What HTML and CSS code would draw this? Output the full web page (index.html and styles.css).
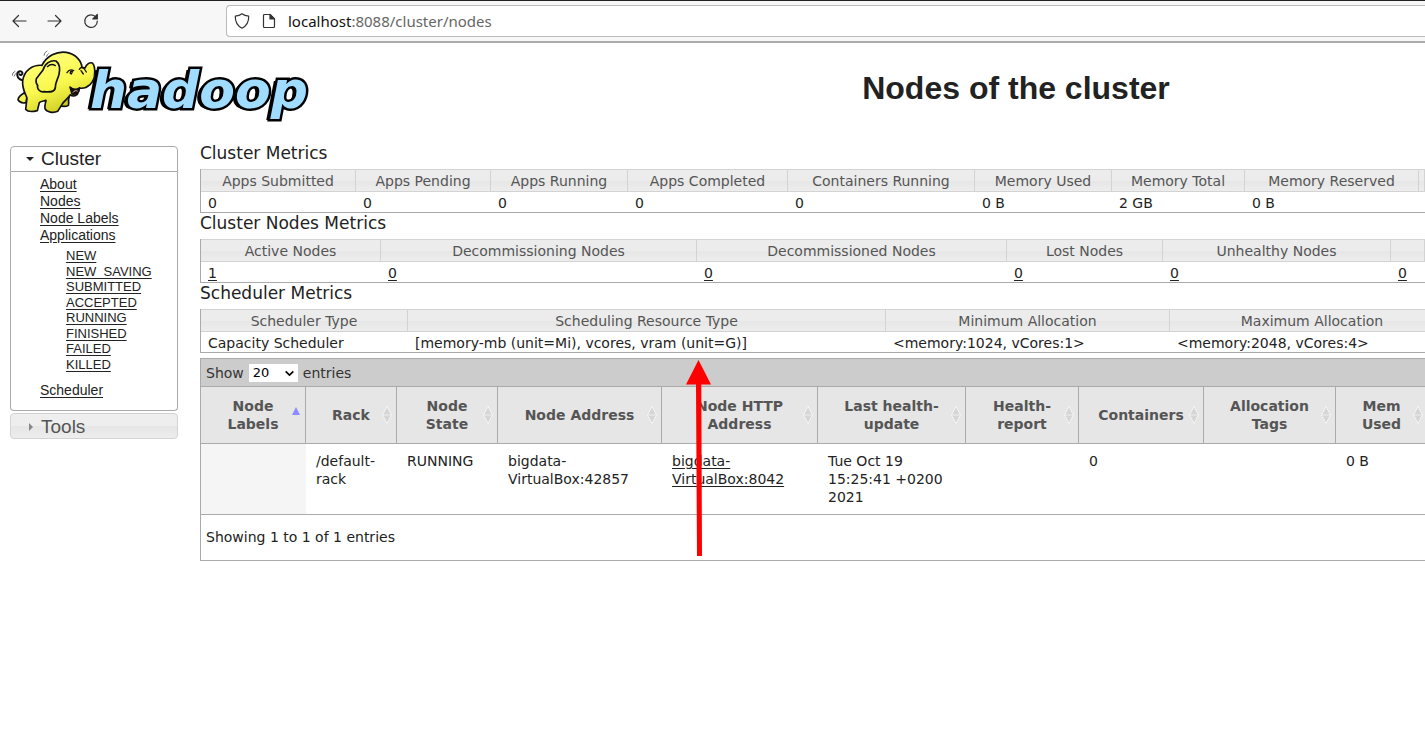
FILE: index.html
```html
<!DOCTYPE html>
<html lang="en">
<head>
<meta charset="utf-8">
<title>Nodes of the cluster</title>
<link rel="stylesheet" href="styles.css">
</head>
<body>
<svg class="defs" aria-hidden="true">
  <symbol id="sort" viewBox="0 0 10 18">
    <path d="M5 1L9 9L5 17L1 9Z" fill="#d6d6d6"/>
    <path d="M5 .5L9.500 9L5 17.500L.5 9Z" fill="none" stroke="#fff" stroke-width="1" stroke-dasharray="1.500 1"/>
    <path d="M1 9H9" stroke="#eee" stroke-width="1"/>
  </symbol>
</svg>
<nav class="browser" aria-label="Browser">
  <div class="browser-buttons">
    <button type="button" aria-label="Back"><svg viewBox="0 0 16 16"><path d="M15 8H2M7.500 2.500L2 8l5.500 5.500"/></svg></button>
    <button type="button" aria-label="Forward"><svg viewBox="0 0 16 16"><path d="M1 8h13M8.500 2.500L14 8l-5.500 5.500"/></svg></button>
    <button type="button" aria-label="Reload"><svg viewBox="0 0 16 16"><path d="M13 4.300A6.300 6.300 0 1 0 14.300 8"/><path d="M14.300 1.500V6H9.800Z" class="solid"/></svg></button>
  </div>
  <div class="urlbar">
    <svg viewBox="0 0 16 16"><path d="M8 .8C6 2.400 3.800 3 1.300 3.200C1.100 8.500 3 12.500 8 15.200C13 12.500 14.900 8.500 14.700 3.200C12.200 3 10 2.400 8 .8Z"/></svg>
    <svg viewBox="0 0 16 16"><path d="M3.500 1.500H9L13.500 6V13.500a1 1 0 0 1-1 1H3.500a1 1 0 0 1-1-1V2.500a1 1 0 0 1 1-1Z"/><path d="M9 1.500V6h4.500Z" class="solid"/></svg>
    <div class="url" role="textbox" contenteditable="true" spellcheck="false" aria-label="Address"><b>localhost</b>:8088/cluster/nodes</div>
  </div>
</nav>

<header class="banner">
  <div class="logo">
    <svg class="elephant" viewBox="0 0 300 225" aria-hidden="true">
      <defs><linearGradient id="skin" gradientUnits="userSpaceOnUse" x1="90" y1="10" x2="160" y2="200"><stop offset="0" stop-color="#ffff80"/><stop offset=".55" stop-color="#f9f84e"/><stop offset="1" stop-color="#c9c81c"/></linearGradient></defs>
      <g fill="url(#skin)" stroke="#111" stroke-width="5" stroke-linejoin="round" stroke-linecap="round">
        <path d="M44 97C33 98 23 92 22 82C20 70 34 66 37 74C39 80 31 83 29 79" fill="none" stroke-width="6"/>
        <path d="M42 135C32 141 25 149 24 155C29 164 40 166 48 164L52 140Z"/>
        <path d="M145 145L178 145C173 155 178 166 175 172C168 177 155 175 146 173Z" fill="#c9c81c"/>
        <path d="M96 52C68 50 42 66 38 99C36 122 46 137 51 150L47 184C53 192 70 191 82 188L88 164C94 158 103 160 108 157C107 165 103 172 105 182C110 193 130 196 143 190L158 166C165 158 174 150 181 140C186 145 194 145 202 139C205 134 208 126 208 120C230 124 254 106 254 76C255 62 253 51 247 45C240 42 229 48 225 60L216 58C214 38 196 17 169 13C140 9 110 24 96 52Z"/>
        <path d="M138 39C122 35 104 47 99 66L79 92C77 102 79 108 83 112C80 123 91 134 103 131C120 133 134 133 136 119C135 104 144 93 147 79C151 61 147 46 138 39Z"/>
        <path d="M180 117C188 125 199 126 209 120C206 134 195 142 186 137Z" fill="#111"/>
        <path d="M189 133C193 127 199 127 202 129" stroke="#f6a9a0" fill="none" stroke-width="3"/>
        <path d="M171 74Q179 61 191 68M181 76Q180 68 187 71L184 78Z M208 64Q213 56 220 60M213 68l7 10M221 60l8 12M112 56Q124 45 136 53" fill="none" stroke-width="4"/>
        <path d="M102 22Q102 13 111 9M110 25Q111 19 115 17M7 82Q6 73 15 70M13 84Q13 79 17 77" fill="none" stroke="#777" stroke-width="3"/>
      </g>
    </svg>
    <span class="wordmark">hadoop</span>
  </div>
  <h1>Nodes of the cluster</h1>
</header>

<div class="layout">
  <aside class="sidebar">
    <button type="button" class="panel-head open" aria-expanded="true" aria-controls="cluster-panel"><i class="arrow-down"></i>Cluster</button>
    <div class="panel" id="cluster-panel">
      <ul class="links">
        <li><a href="#">About</a></li>
        <li><a href="#">Nodes</a></li>
        <li><a href="#">Node Labels</a></li>
        <li><a href="#">Applications</a>
          <ul class="states">
            <li><a href="#">NEW</a></li>
            <li><a href="#">NEW_SAVING</a></li>
            <li><a href="#">SUBMITTED</a></li>
            <li><a href="#">ACCEPTED</a></li>
            <li><a href="#">RUNNING</a></li>
            <li><a href="#">FINISHED</a></li>
            <li><a href="#">FAILED</a></li>
            <li><a href="#">KILLED</a></li>
          </ul>
        </li>
        <li><a href="#">Scheduler</a></li>
      </ul>
    </div>
    <button type="button" class="panel-head closed" aria-expanded="false"><i class="arrow-right"></i>Tools</button>
  </aside>

  <main class="content">
    <h2>Cluster Metrics</h2>
    <table class="metrics">
      <colgroup><col class="w155"><col class="w135"><col class="w137"><col class="w160"><col class="w187"><col class="w137"><col class="w133"><col class="w174"><col></colgroup>
      <thead><tr><th>Apps Submitted</th><th>Apps Pending</th><th>Apps Running</th><th>Apps Completed</th><th>Containers Running</th><th>Memory Used</th><th>Memory Total</th><th>Memory Reserved</th><th></th></tr></thead>
      <tbody><tr><td>0</td><td>0</td><td>0</td><td>0</td><td>0</td><td>0 B</td><td>2 GB</td><td>0 B</td><td></td></tr></tbody>
    </table>
    <h2>Cluster Nodes Metrics</h2>
    <table class="metrics">
      <colgroup><col class="w180"><col class="w316"><col class="w310"><col class="w156"><col class="w228"><col></colgroup>
      <thead><tr><th>Active Nodes</th><th>Decommissioning Nodes</th><th>Decommissioned Nodes</th><th>Lost Nodes</th><th>Unhealthy Nodes</th><th></th></tr></thead>
      <tbody><tr><td><a href="#">1</a></td><td><a href="#">0</a></td><td><a href="#">0</a></td><td><a href="#">0</a></td><td><a href="#">0</a></td><td><a href="#">0</a></td></tr></tbody>
    </table>
    <h2>Scheduler Metrics</h2>
    <table class="metrics">
      <colgroup><col class="w207"><col class="w478"><col class="w284"><col class="w285"></colgroup>
      <thead><tr><th>Scheduler Type</th><th>Scheduling Resource Type</th><th>Minimum Allocation</th><th>Maximum Allocation</th></tr></thead>
      <tbody><tr><td>Capacity Scheduler</td><td>[memory-mb (unit=Mi), vcores, vram (unit=G)]</td><td>&lt;memory:1024, vCores:1&gt;</td><td>&lt;memory:2048, vCores:4&gt;</td></tr></tbody>
    </table>

    <section class="nodes">
      <div class="toolbar">
        <label for="length">Show</label>
        <span class="select"><select id="length"><option>20</option><option>40</option><option>60</option></select><svg viewBox="0 0 10 10"><path d="M1.500 3L5 6.500L8.500 3"/></svg></span>
        <span>entries</span>
      </div>
      <table class="grid">
        <colgroup><col class="w105"><col class="w91"><col class="w101"><col class="w164"><col class="w156"><col class="w148"><col class="w113"><col class="w125"><col class="w132"><col class="w92"></colgroup>
        <thead><tr>
          <th class="sorted">Node Labels<i class="sort-up"></i></th>
          <th>Rack<svg><use href="#sort"/></svg></th>
          <th>Node State<svg><use href="#sort"/></svg></th>
          <th>Node Address<svg><use href="#sort"/></svg></th>
          <th>Node HTTP Address<svg><use href="#sort"/></svg></th>
          <th>Last health-update<svg><use href="#sort"/></svg></th>
          <th>Health-report<svg><use href="#sort"/></svg></th>
          <th>Containers<svg><use href="#sort"/></svg></th>
          <th>Allocation Tags<svg><use href="#sort"/></svg></th>
          <th>Mem Used<svg><use href="#sort"/></svg></th>
        </tr></thead>
        <tbody><tr>
          <td class="sorted"></td><td>/default-rack</td><td>RUNNING</td><td>bigdata-VirtualBox:42857</td><td><a href="#">bigdata-VirtualBox:8042</a></td><td>Tue Oct 19 15:25:41 +0200 2021</td><td></td><td>0</td><td></td><td>0 B</td>
        </tr></tbody>
      </table>
      <div class="info">Showing 1 to 1 of 1 entries</div>
      <svg class="pointer" viewBox="0 0 26 197" aria-hidden="true"><path d="M12.500 0L25 24.500H15.300L16 196H11L10 24.500H0Z" fill="#f00"/></svg>
    </section>
  </main>
</div>
</body>
</html>
```
FILE: styles.css
```css
* { box-sizing: border-box; }
body {
  margin: 0;
  background: #fff;
  color: #222;
  font-family: "DejaVu Sans", sans-serif;
  font-size: 14px;
  overflow-x: hidden;
}
a { color: #222; text-decoration: underline; text-underline-offset: 2px; }
button { font: inherit; color: inherit; border: 0; background: none; padding: 0; }
ul { list-style: none; margin: 0; padding: 0; }
.defs { display: none; }

/* browser bar */
.browser {
  display: flex;
  align-items: center;
  height: 43px;
  background: #f7f7f7;
  border-top: 1px solid #222;
  border-bottom: 2px solid #aaa;
}
.browser svg { display: block; width: 16px; height: 16px; fill: none; stroke: #333; stroke-width: 1.2; stroke-linecap: round; stroke-linejoin: round; }
.browser svg .solid { fill: #333; }
.browser-buttons { display: flex; gap: 20px; width: 226px; padding-left: 11px; }
.urlbar {
  flex: 1;
  display: flex;
  align-items: center;
  gap: 11px;
  height: 32px;
  padding-left: 7px;
  background: #fff;
  border: 1px solid #bbb;
  border-right: 0;
  border-radius: 4px 0 0 4px;
}
.url { font: 15px/20px "Noto Sans", sans-serif; color: #666; outline: 0; }
.url b { font-weight: 400; color: #111; }

/* banner */
.banner { display: flex; align-items: center; height: 100px; }
.logo { display: flex; align-items: flex-start; flex: 0 0 607px; height: 100px; padding: 5px 0 0 10px; }
.elephant { width: 100px; height: 75px; position: relative; z-index: 1; flex: none; }
.wordmark {
  margin-left: -20px;
  font: italic 700 52px/60px "DejaVu Sans", sans-serif;
  padding-top: 12px;
  color: #9fdcff;
  -webkit-text-stroke: 5px #000;
  paint-order: stroke fill;
  text-shadow: -2px 0 #000, -4px 1px #000;
}
h1 { flex: 1; margin: 0; padding: 0 0 10px; text-align: center; font: 700 32px/36px "Liberation Sans", sans-serif; }

.layout { display: flex; align-items: flex-start; }

/* sidebar */
.sidebar { width: 168px; margin: 3px 22px 0 10px; flex: none; font-family: "Liberation Sans", sans-serif; }
.panel-head {
  display: flex;
  align-items: center;
  width: 100%;
  height: 26px;
  padding-left: 15px;
  font-size: 19px;
  line-height: 22px;
  border: 1px solid #aaa;
  border-radius: 4px;
}
.panel-head.open { border-radius: 4px 4px 0 0; }
.panel-head.closed { margin-top: 2px; padding-top: 2px; color: #555; border-color: #d3d3d3; background: linear-gradient(#eee 50%, #e6e6e6 50%, #ededed); }
.panel-head i { width: 15px; display: flex; }
.panel-head i::before { content: ""; border: 4px solid transparent; }
.panel-head .arrow-down::before { border-top-color: #222; border-bottom-width: 0; }
.panel-head .arrow-right::before { border-left-color: #888; margin-left: 3px; border-right-width: 0; }
.panel { border: 1px solid #aaa; border-top: 0; border-radius: 0 0 4px 4px; padding: 4px 0 11px 29px; }
.links { font-size: 14px; line-height: 17px; }
.states {
  display: flex;
  flex-direction: column;
  justify-content: space-between;
  height: 124px;
  margin: 4px 0 10px 26px;
  font-size: 13px;
  line-height: 15px;
}

/* metrics */
.content { flex: 1; min-width: 0; }
h2 { margin: 0; height: 26px; font-size: 17px; line-height: 20px; font-weight: 400; }
table { width: 100%; table-layout: fixed; border-spacing: 0; }
.metrics { border-left: 1px solid #aaa; }
.metrics th {
  padding: 1px 7px 0;
  line-height: 20px;
  font-weight: 400;
  color: #555;
  border: solid #d3d3d3;
  border-width: 1px 1px 1px 0;
  background: linear-gradient(#ececec 50%, #e6e6e6 50%, #ededed);
}
.metrics td { height: 21px; padding: 2px 7px 0; line-height: 18px; border-bottom: 1px solid #aaa; white-space: nowrap; }

/* nodes */
.nodes { position: relative; margin-top: 5px; border: solid #aaa; border-width: 1px 0 1px 1px; }
.toolbar { display: flex; align-items: center; gap: 5px; height: 27px; padding-left: 5px; background: #ccc; color: #333; }
.select { position: relative; display: block; height: 18px; }
.select select {
  appearance: none;
  display: block;
  width: 49px;
  height: 18px;
  padding: 0 4px;
  border: 0;
  border-radius: 0;
  background: #fff;
  color: #000;
  font: 13px/18px "DejaVu Sans", sans-serif;
}
.select svg { position: absolute; right: 3px; top: 4px; width: 11px; height: 11px; fill: none; stroke: #000; stroke-width: 1.5; pointer-events: none; }
.grid th {
  position: relative;
  height: 58px;
  padding: 0 16px;
  line-height: 18px;
  color: #555;
  background: #e6e6e6;
  border: solid #aaa;
  border-width: 1px 1px 1px 0;
}
.grid th svg { position: absolute; right: 4px; top: 19px; width: 10px; height: 18px; }
.sort-up { position: absolute; right: 5px; top: 20px; border: 4px solid transparent; border-top: 0; border-bottom: 8px solid #8c8cff; }
.grid td { padding: 8px 10px; line-height: 18px; vertical-align: top; border-bottom: 1px solid #aaa; }
.grid td.sorted { background: #f5f5f5; }
.info { padding: 13px 5px 14px; line-height: 18px; }
.pointer { position: absolute; left: 485px; top: 1px; width: 26px; height: 197px; pointer-events: none; }

/* column widths */
.w91 { width: 91px; } .w92 { width: 92px; } .w101 { width: 101px; } .w105 { width: 105px; }
.w113 { width: 113px; } .w125 { width: 125px; } .w132 { width: 132px; } .w133 { width: 133px; }
.w135 { width: 135px; } .w137 { width: 137px; } .w148 { width: 148px; } .w155 { width: 155px; }
.w156 { width: 156px; } .w160 { width: 160px; } .w164 { width: 164px; } .w174 { width: 174px; }
.w180 { width: 180px; } .w187 { width: 187px; } .w207 { width: 207px; } .w228 { width: 228px; }
.w284 { width: 284px; } .w285 { width: 285px; } .w310 { width: 310px; } .w316 { width: 316px; }
.w478 { width: 478px; }
```
